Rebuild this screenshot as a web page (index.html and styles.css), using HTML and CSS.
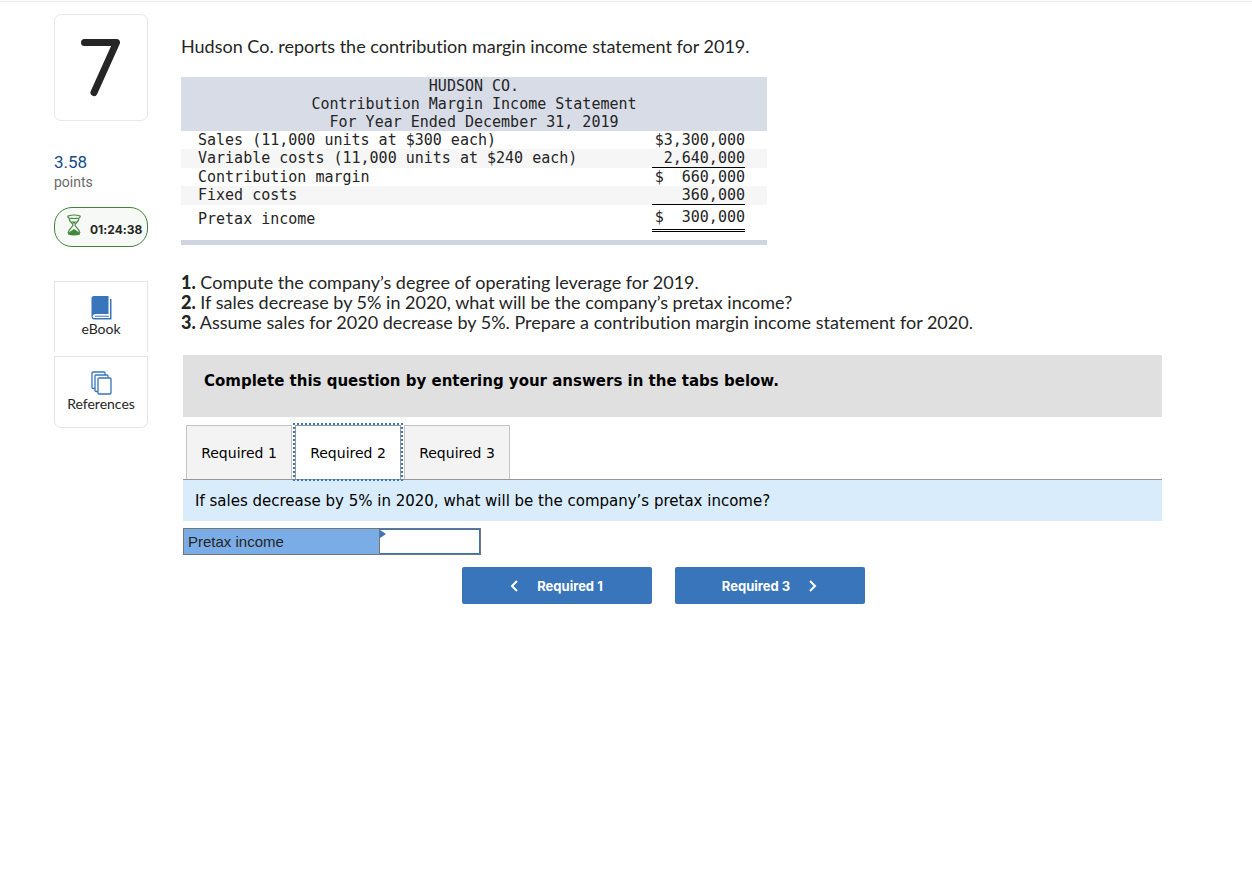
FILE: index.html
```html
<!DOCTYPE html>
<html lang="en">
<head>
<meta charset="utf-8">
<title>Question 7</title>
<link rel="stylesheet" href="styles.css">
</head>
<body>
<div class="page">
  <aside class="sidebar">
    <div class="number">
      <svg class="seven" viewBox="0 0 40 58" role="img" aria-label="7"><path d="M3.500 3.500H35.500L13 53.500" /></svg>
    </div>
    <div class="score">3.58</div>
    <div class="score-label">points</div>
    <div class="timer">
      <svg class="hourglass" viewBox="0 0 14 22" aria-hidden="true">
        <path class="glass" d="M1 2Q7 0 13 2Q13.500 3.500 12 4Q7 5 2 4Q0.500 3.500 1 2ZM2 4C2 8 6 9 6 11S2 14 1 19M12 4C12 8 8 9 8 11S12 14 13 19"/>
        <path class="sand" d="M4.500 7.500H9.500L7 10ZM1 19L4 17L7 15L10 17L13 19V20.500Q7 22.500 1 20.500Z"/>
      </svg>
      <span>01:24:38</span>
    </div>
    <nav class="tools">
      <button class="tool tool-open" type="button">
        <svg viewBox="0 0 21 24" aria-hidden="true">
          <path fill="#3875ba" d="M3 0H17.500V18H4Q1.500 18.500 1.500 20.500Q1.500 22 4 22H19V3H20.500V23.500H3.500Q0.500 23.500 0.500 20.500V2.500Q0.500 0 3 0Z"/>
          <path stroke="#3875ba" stroke-width="1" fill="none" d="M4 20.200H18"/>
        </svg>
        eBook
      </button>
      <button class="tool tool-last" type="button">
        <svg viewBox="0 0 21 24" aria-hidden="true">
          <g fill="#fff" stroke="#3875ba" stroke-width="1.300">
            <rect x="1" y="1" width="13" height="16.500" rx="1"/>
            <rect x="4" y="4" width="13" height="16.500" rx="1"/>
            <rect x="7" y="7" width="13" height="16" rx="1"/>
          </g>
        </svg>
        References
      </button>
    </nav>
  </aside>
  <main class="main">
    <p class="intro">Hudson Co. reports the contribution margin income statement for 2019.</p>
    <table class="statement">
      <thead>
        <tr><th colspan="3">HUDSON CO.<br>Contribution Margin Income Statement<br>For Year Ended December 31, 2019</th></tr>
      </thead>
      <tbody>
        <tr><td class="label">Sales (11,000 units at $300 each)</td><td class="amount">$3,300,000</td><td class="edge"></td></tr>
        <tr class="shade"><td class="label">Variable costs (11,000 units at $240 each)</td><td class="amount ruled">2,640,000</td><td></td></tr>
        <tr><td class="label">Contribution margin</td><td class="amount">$&nbsp; 660,000</td><td></td></tr>
        <tr class="shade"><td class="label">Fixed costs</td><td class="amount ruled">360,000</td><td></td></tr>
        <tr class="total"><td class="label">Pretax income</td><td class="amount double">$&nbsp; 300,000</td><td></td></tr>
      </tbody>
      <tfoot><tr><td class="gap" colspan="3"></td></tr></tfoot>
    </table>
    <div class="tasks">
      <p><b>1.</b> Compute the company’s degree of operating leverage for 2019.</p>
      <p><b>2.</b> If sales decrease by 5% in 2020, what will be the company’s pretax income?</p>
      <p><b>3.</b> Assume sales for 2020 decrease by 5%. Prepare a contribution margin income statement for 2020.</p>
    </div>
    <section class="answer">
      <h2 class="instruction">Complete this question by entering your answers in the tabs below.</h2>
      <div class="tabs" role="tablist">
        <button class="tab" type="button" role="tab" aria-selected="false">Required 1</button>
        <button class="tab tab-active" type="button" role="tab" aria-selected="true">Required 2</button>
        <button class="tab" type="button" role="tab" aria-selected="false">Required 3</button>
      </div>
      <p class="prompt">If sales decrease by 5% in 2020, what will be the company’s pretax income?</p>
      <div class="entry">
        <label for="pretax">Pretax income</label>
        <span class="field"><input id="pretax" type="text"></span>
      </div>
      <div class="steps">
        <button class="step" type="button">
          <svg viewBox="0 0 8 12" aria-hidden="true"><path d="M7 1L2 6L7 11"/></svg>
          Required 1
        </button>
        <button class="step" type="button">
          Required 3
          <svg viewBox="0 0 8 12" aria-hidden="true"><path d="M1 1L6 6L1 11"/></svg>
        </button>
      </div>
    </section>
  </main>
</div>
</body>
</html>
```
FILE: styles.css
```css
* { box-sizing: border-box; }
body {
  margin: 0;
  background: #fff;
  color: #252525;
  font-family: "Lato", "Liberation Sans", sans-serif;
  font-size: 18px;
  font-variant-ligatures: none;
  line-height: 20px;
}
p, h2 { margin: 0; }
button, input { font: inherit; margin: 0; }

.page {
  display: flex;
  gap: 33px;
  margin-top: 1px;
  padding: 12px 90px 24px 54px;
  border-top: 1px solid #ebebeb;
}

.sidebar { flex: 0 0 94px; }
.number {
  height: 107px;
  border: 1px solid #e8e8e8;
  border-radius: 7px;
  display: flex;
  justify-content: center;
  padding-top: 24px;
}
.seven { width: 40px; height: 58px; }
.seven path { fill: none; stroke: #252525; stroke-width: 7; stroke-linecap: round; stroke-linejoin: round; }
.score { margin-top: 31px; color: #174a8b; font-family: "Roboto", sans-serif; font-size: 17px; }
.score-label { color: #6a6a6a; font-family: "Roboto", sans-serif; font-size: 14px; }
.timer {
  display: flex;
  align-items: center;
  gap: 9px;
  height: 40px;
  margin-top: 15px;
  padding-left: 12px;
  border: 1px solid #42803b;
  border-radius: 18px;
  background: #f7f9f7;
  font-family: "Inter", sans-serif;
  font-size: 12px;
  font-weight: 700;
}
.timer span { padding-top: 5px; }
.hourglass { width: 14px; height: 22px; margin-bottom: 4px; }
.glass { fill: none; stroke: #42883b; stroke-width: 1.2; }
.sand { fill: #42883b; }
.tools { display: flex; flex-direction: column; gap: 4px; margin-top: 34px; }
.tool {
  display: flex;
  flex-direction: column;
  align-items: center;
  height: 71px;
  padding: 14px 0 0;
  border: 1px solid #e5e5e5;
  background: #fff;
  color: #252525;
  font-size: 14px;
  line-height: 18px;
}
.tool svg { width: 21px; height: 24px; }
.tool-open { border-bottom: 0; }
.tool-last { height: 72px; border-radius: 0 0 7px 7px; }

.main { flex: 1; min-width: 0; padding-top: 22px; }
.statement {
  width: 586px;
  max-width: 100%;
  margin-top: 21px;
  border-collapse: separate;
  border-spacing: 0;
  border-bottom: 5px solid #cfd4e1;
  font-family: "DejaVu Sans Mono", monospace;
  font-size: 15px;
  line-height: 18px;
}
.statement th { padding: 0; background: #d8dce7; font-weight: 400; }
.statement td { padding: 0; vertical-align: top; }
.statement .label { padding-left: 17px; }
.statement .amount { width: 93px; text-align: right; }
.statement .edge { width: 22px; }
.statement .ruled { border-bottom: 1px solid #000; }
.statement .total .label { padding-top: 5px; }
.statement .double { padding: 3px 0; border-bottom: 3px double #000; }
.shade { background: #f6f6f6; }
.statement .gap { height: 8px; }

.tasks { margin-top: 27px; }
.tasks b { font-weight: 900; }

.answer {
  margin: 23px 0 0 2px;
  color: #000;
  font-family: "DejaVu Sans", sans-serif;
}
.instruction {
  padding: 16px 21px 26px;
  background: #e0e0e0;
  font-size: 15px;
  line-height: 20px;
}
.tabs {
  display: flex;
  gap: 3px;
  margin-top: 8px;
  padding-left: 3px;
  border-bottom: 1px solid #979797;
}
.tab {
  width: 106px;
  height: 54px;
  padding: 0;
  border: 1px solid #c4c4c4;
  border-bottom: 0;
  background: #f3f3f3;
  color: #000;
  font-size: 14px;
}
.tab-active {
  border-color: #979797;
  background: #fff;
  outline: 2px dotted #3875ba;
}
.prompt { padding: 11px 12px 10px; background: #d9ecfb; font-size: 15px; }
.entry {
  display: flex;
  width: 298px;
  height: 27px;
  margin-top: 7px;
  border: 1px solid #757575;
  font-family: "Liberation Sans", sans-serif;
  font-size: 15px;
  line-height: 25px;
}
.entry label { flex: 0 0 196px; padding-left: 4px; background: #7aace6; color: #252525; border-right: 1px solid #757575; }
.field { flex: 1; position: relative; }
.field::before {
  content: "";
  position: absolute;
  left: 0;
  top: 1px;
  border-left: 6px solid #3875ba;
  border-top: 4px solid transparent;
  border-bottom: 4px solid transparent;
}
.field input { display: block; width: 100%; height: 25px; padding: 0 6px; border: 1px solid #3875ba; border-left: 0; background: #fff; outline: 0; }
.steps { display: flex; justify-content: center; gap: 23px; margin-top: 12px; padding-right: 19px; }
.step {
  display: flex;
  align-items: center;
  justify-content: center;
  gap: 19px;
  width: 190px;
  height: 37px;
  padding: 0;
  border: 0;
  border-radius: 2px;
  background: #3875ba;
  color: #fff;
  font-family: "Inter", sans-serif;
  font-size: 13px;
  font-weight: 700;
}
.step svg { width: 8px; height: 12px; }
.step path { fill: none; stroke: #fff; stroke-width: 2; }
```
